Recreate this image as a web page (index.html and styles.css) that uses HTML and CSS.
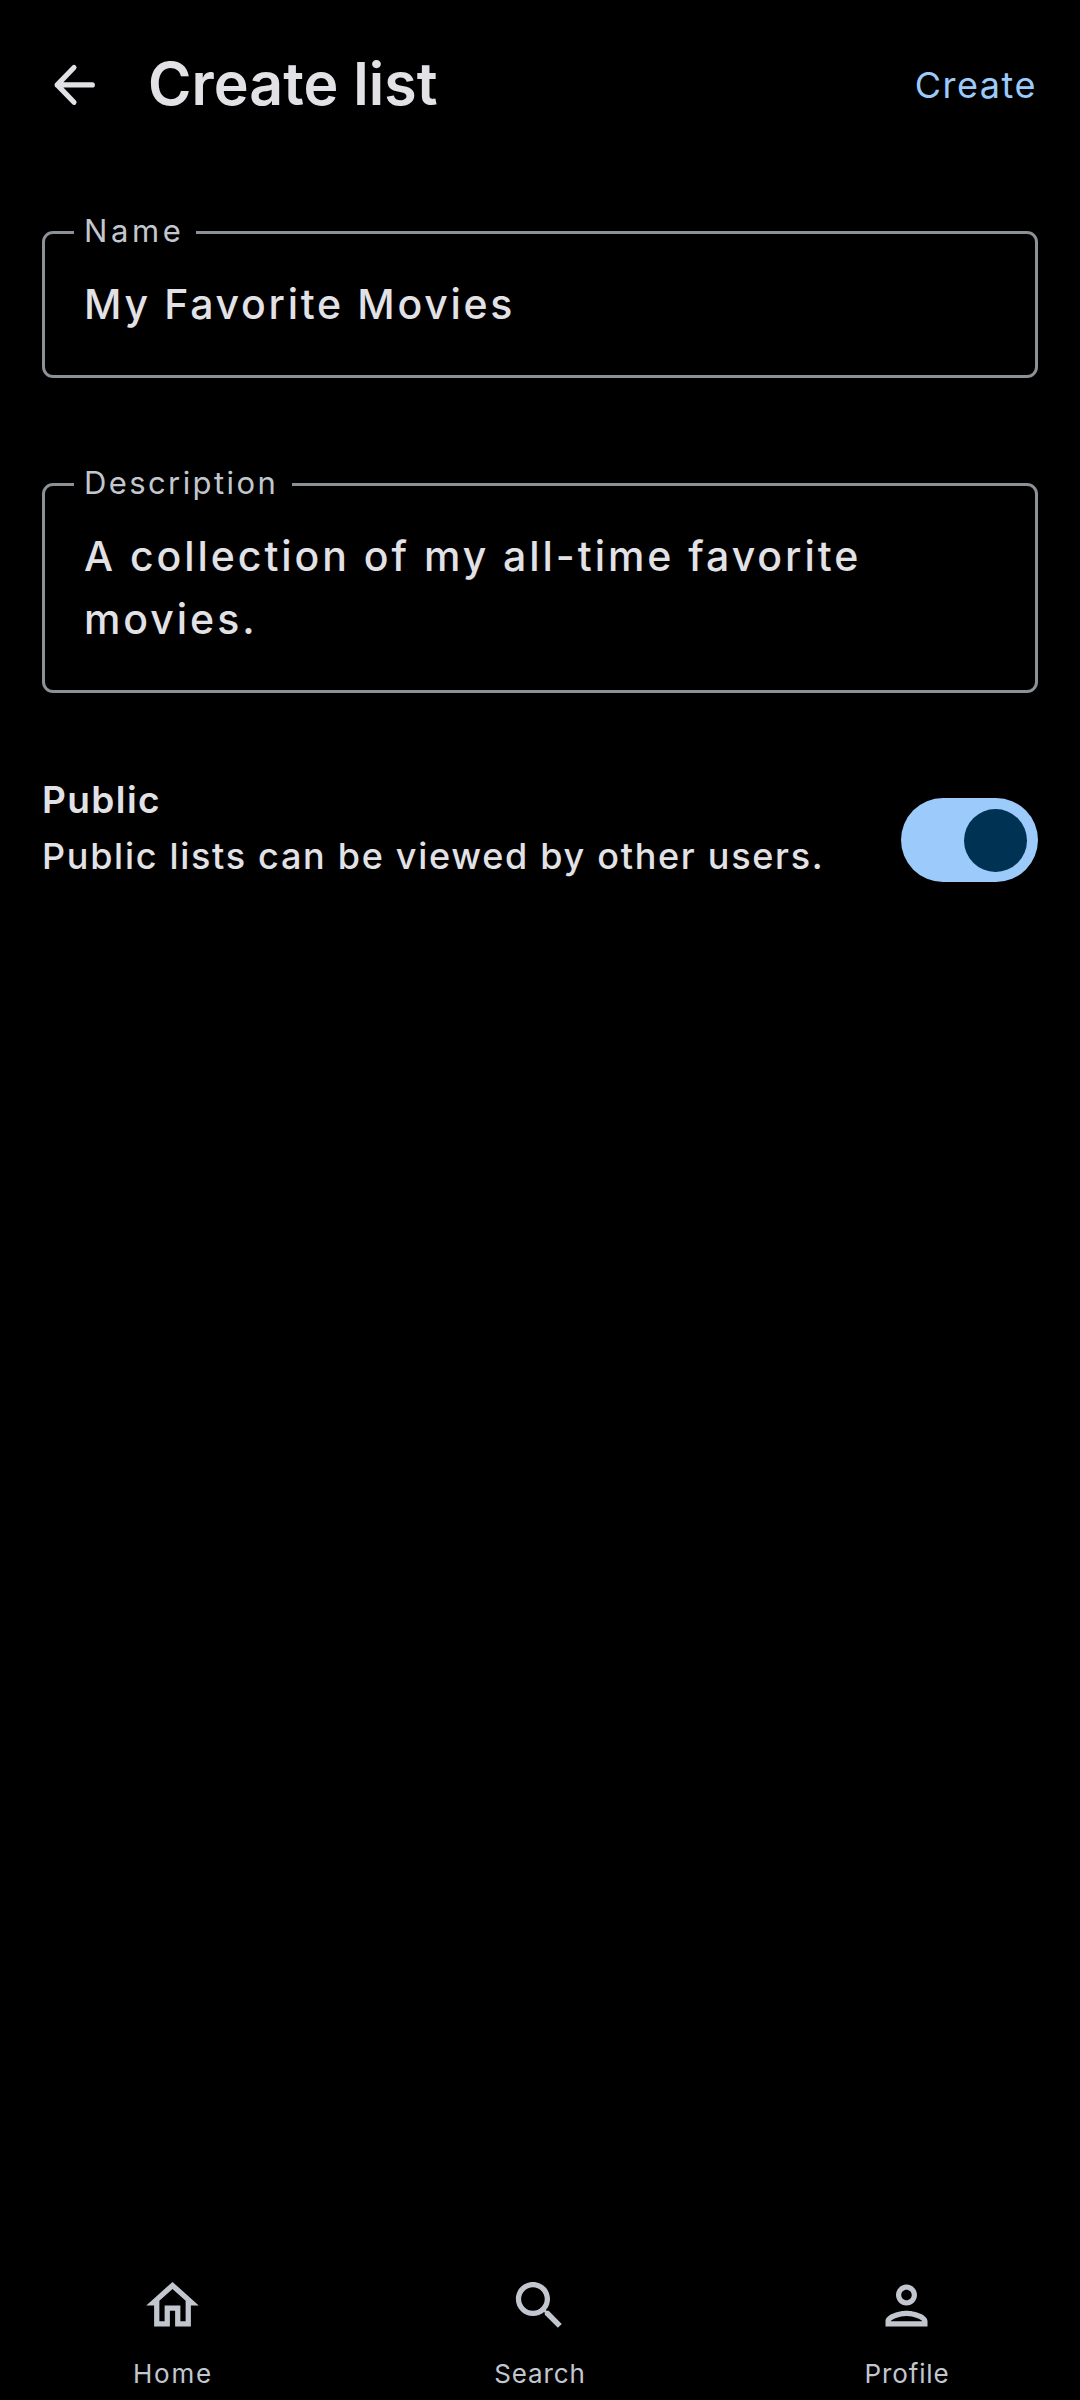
FILE: index.html
```html
<!DOCTYPE html>
<html lang="en">
<head>
<meta charset="utf-8">
<title>Create list</title>
<link rel="stylesheet" href="styles.css">
</head>
<body>
<div class="screen">
  <header class="app-bar">
    <svg class="icon" viewBox="0 0 63 63" fill="none" stroke="currentColor" stroke-width="5.2" stroke-linecap="round" stroke-linejoin="round"><path d="M31 14.5 14.2 31.9 31 49.3M14.2 31.9H49.3"/></svg>
    <h1 class="title">Create list</h1>
    <span class="action">Create</span>
  </header>
  <main class="form">
    <fieldset class="field">
      <legend class="legend legend-name">Name</legend>
      <div class="value value-name">My Favorite Movies</div>
    </fieldset>
    <fieldset class="field">
      <legend class="legend legend-description">Description</legend>
      <div class="value value-description">A collection of my all-time favorite<br>movies.</div>
    </fieldset>
    <div class="setting">
      <div class="setting-text">
        <div class="setting-title">Public</div>
        <div class="setting-note">Public lists can be viewed by other users.</div>
      </div>
      <div class="switch" role="switch" aria-checked="true"><span class="thumb"></span></div>
    </div>
  </main>
  <nav class="nav">
    <div class="nav-item">
      <svg class="icon" viewBox="0 0 24 24" fill="currentColor"><path d="M12 5.69l5 4.5V18h-2v-6H9v6H7v-7.81l5-4.5M12 3L2 12h3v8h6v-6h2v6h6v-8h3L12 3z"/></svg>
      <span class="nav-label label-home">Home</span>
    </div>
    <div class="nav-item">
      <svg class="icon" viewBox="0 0 24 24" fill="currentColor"><path d="M15.5 14h-.79l-.28-.27C15.41 12.59 16 11.11 16 9.5 16 5.91 13.09 3 9.5 3S3 5.91 3 9.5 5.91 16 9.5 16c1.61 0 3.09-.59 4.23-1.57l.27.28v.79l5 4.99L20.49 19l-4.99-5zm-6 0C7.01 14 5 11.99 5 9.5S7.01 5 9.5 5 14 7.01 14 9.5 11.99 14 9.5 14z"/></svg>
      <span class="nav-label">Search</span>
    </div>
    <div class="nav-item">
      <svg class="icon" viewBox="0 0 24 24" fill="currentColor"><path d="M12 6c1.1 0 2 .9 2 2s-.9 2-2 2-2-.9-2-2 .9-2 2-2m0 10c2.7 0 5.8 1.29 6 2H6c.23-.72 3.31-2 6-2m0-12C9.79 4 8 5.79 8 8s1.79 4 4 4 4-1.79 4-4-1.79-4-4-4zm0 10c-2.67 0-8 1.34-8 4v2h16v-2c0-2.66-5.33-4-8-4z"/></svg>
      <span class="nav-label">Profile</span>
    </div>
  </nav>
</div>
</body>
</html>
```
FILE: styles.css
```css
* { box-sizing: border-box; }
body { margin: 0; background: #000; color: #e2e2e6; font-family: Inter, "Liberation Sans", sans-serif; }
.screen { display: flex; flex-direction: column; width: 1080px; height: 2400px; }
.icon { display: block; flex: none; width: 63px; height: 63px; }
.app-bar { display: flex; align-items: center; height: 168px; padding: 0 43px; }
.title { flex: 1; margin: 0 0 0 42px; font-size: 59px; line-height: 70px; font-weight: 600; letter-spacing: 0.05px; }
.action { padding-top: 2px; font-size: 36px; line-height: 44px; font-weight: 430; letter-spacing: 1.5px; color: #9ccbfb; }
.form { flex: 1; padding: 45px 42px 0; }
.field { min-width: 0; margin: 0 0 87px; padding: 21px 39px 39px; border: 3px solid #8c9198; border-radius: 11px; }
.legend { height: 39px; margin-left: -10px; padding: 0 0 0 10px; font-size: 31px; line-height: 36px; font-weight: 430; white-space: nowrap; color: #c2c7cf; }
.legend-name { width: 122px; letter-spacing: 3.6px; }
.legend-description { width: 218px; letter-spacing: 2.4px; }
.value { font-size: 41px; line-height: 63px; font-weight: 450; white-space: nowrap; }
.value-name { letter-spacing: 2.7px; }
.value-description { letter-spacing: 2.95px; }
.setting { display: flex; align-items: center; justify-content: space-between; height: 112px; margin-top: 91px; }
.setting-text { margin-bottom: 24px; font-size: 36px; line-height: 56px; white-space: nowrap; }
.setting-title { font-size: 37px; letter-spacing: 1.4px; font-weight: 600; }
.setting-note { font-weight: 450; letter-spacing: 1.7px; }
.switch { display: flex; align-items: center; justify-content: flex-end; width: 137px; height: 84px; padding-right: 11px; border-radius: 42px; background: #9ccbfb; }
.thumb { width: 63px; height: 63px; border-radius: 50%; background: #003353; }
.nav { display: flex; justify-content: space-between; height: 126px; padding: 0 74px 0 72px; color: #c2c7cf; }
.nav-item { display: flex; flex-direction: column; align-items: center; width: 200px; gap: 20px; }
.nav-label { padding-left: 2px; font-size: 26px; line-height: 34px; font-weight: 430; letter-spacing: 0.9px; }
.label-home { letter-spacing: 1.8px; }
```
